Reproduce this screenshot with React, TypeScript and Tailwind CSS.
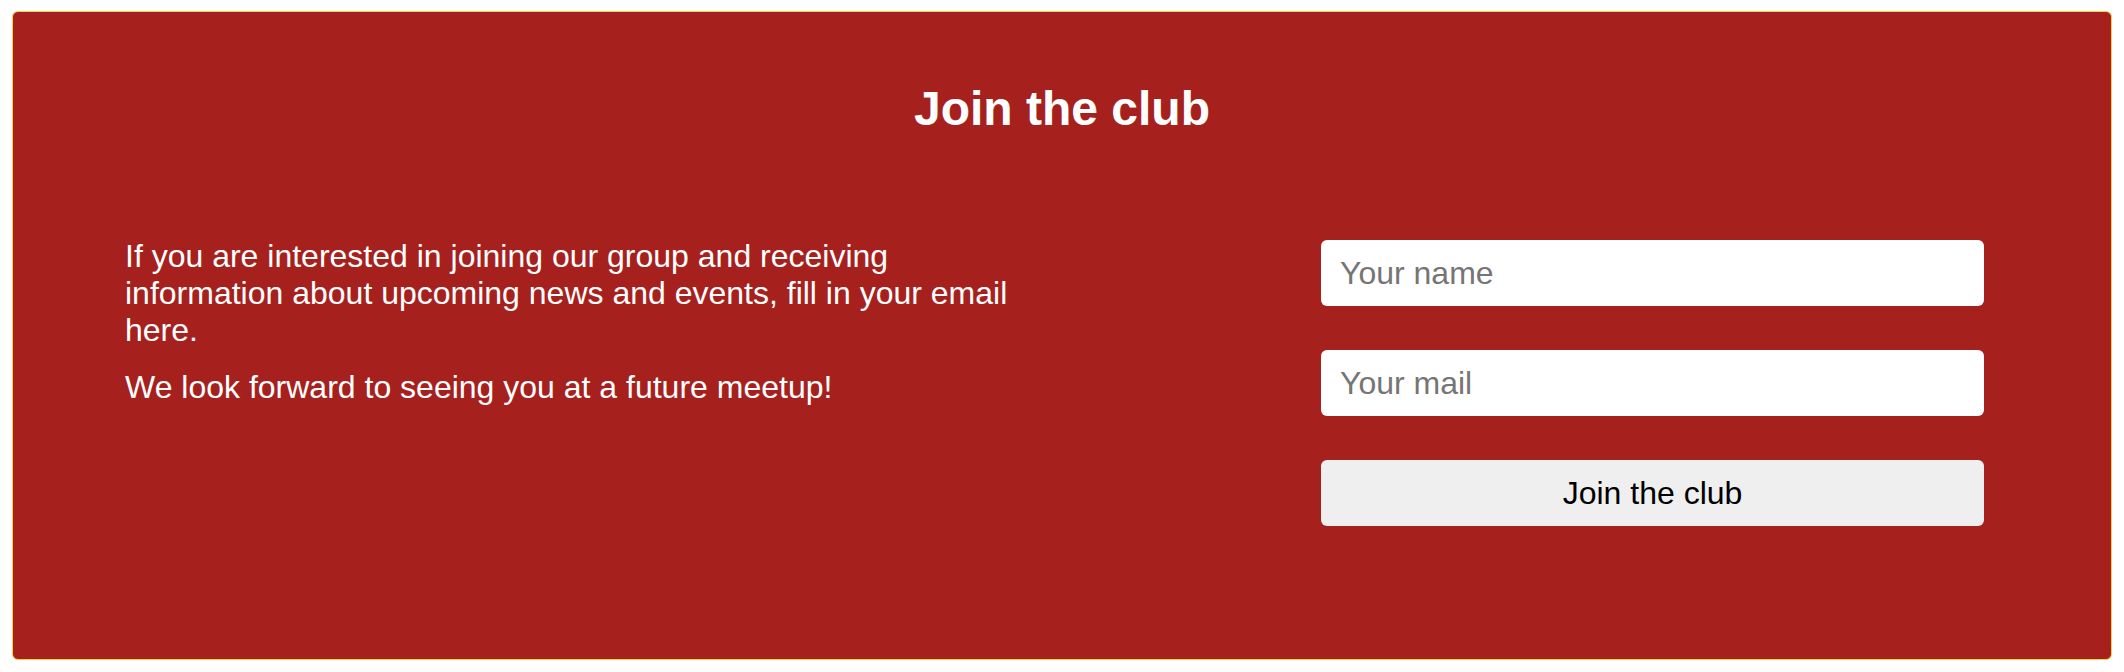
import React from "react";

export default function App() {
  return (
    <div className="min-h-[672px] w-full bg-white pt-[11px] px-[12px] pb-[12px] font-['Liberation_Sans',Arial,sans-serif]">
      <div className="flex h-[649px] flex-col rounded-[6px] border border-[#f7d046] bg-[#a6211e] text-white">
        <h2 className="pt-[69px] text-center text-[48px] font-bold leading-[56px]">Join the club</h2>
        <div className="mt-[99px] flex items-start justify-between pl-[112px] pr-[127px]">
          <div className="mt-[2px] w-[908px] text-[32px] leading-[37px]">
            <p className="mb-[20px]">
              If you are interested in joining our group and receiving information about upcoming news and events, fill in your email here.
            </p>
            <p>We look forward to seeing you at a future meetup!</p>
          </div>
          <form className="mt-[4px] flex w-[663px] flex-col gap-[44px]" onSubmit={(e) => e.preventDefault()}>
            <input
              type="text"
              placeholder="Your name"
              className="h-[66px] w-full rounded-[6px] bg-white px-[19px] text-[32px] text-black outline-none placeholder:text-[#757575]"
            />
            <input
              type="email"
              placeholder="Your mail"
              className="h-[66px] w-full rounded-[6px] bg-white px-[19px] text-[32px] text-black outline-none placeholder:text-[#757575]"
            />
            <button
              type="submit"
              className="h-[66px] w-full rounded-[6px] bg-[#efefef] text-[32px] text-black"
            >
              Join the club
            </button>
          </form>
        </div>
      </div>
    </div>
  );
}
